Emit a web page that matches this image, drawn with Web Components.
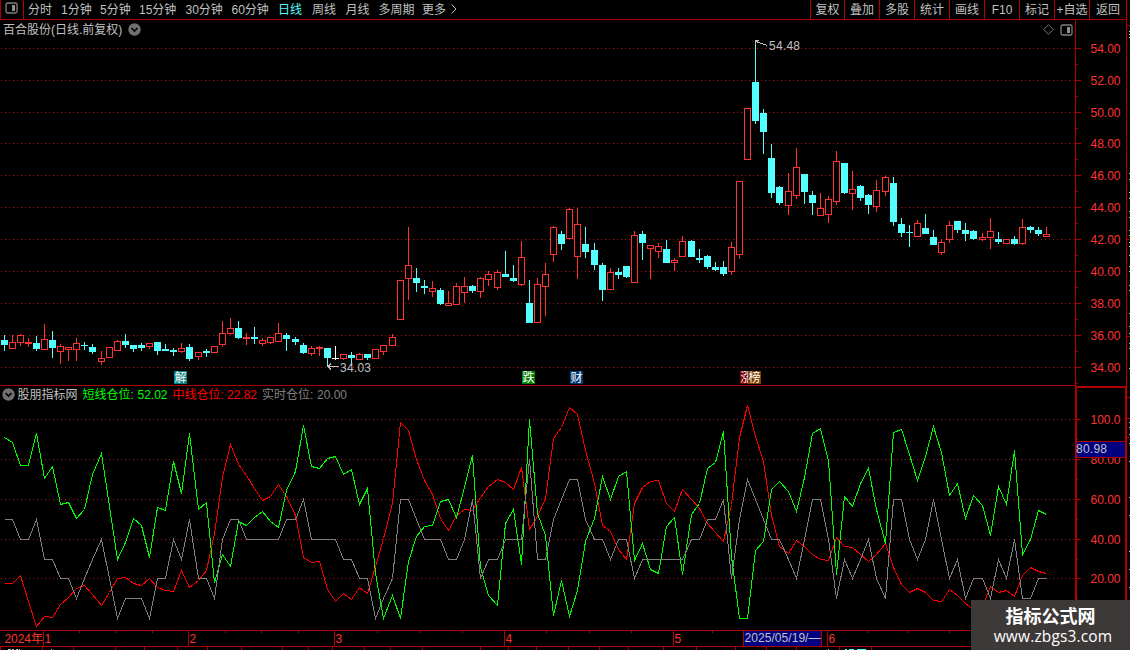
<!DOCTYPE html>
<html lang="zh-CN">
<head>
<meta charset="utf-8">
<title>百合股份 日线</title>
<style>
  html, body {
    margin: 0;
    background: #000;
  }

  body {
    width: 1130px;
    height: 650px;
    overflow: hidden;
    font: 12px/14px "Liberation Sans", "Noto Sans CJK SC", sans-serif;
    color: #c0c0c0;
  }
</style>
</head>
<body>
<stock-terminal></stock-terminal>

<script>
// x of the n-th bar: 8px steps, with one extra pixel every 12 bars
const barX = n => 4 + n * 8 + Math.floor((n - (n >= 60 ? 1 : 0)) / 12);

// kind (r up, c down, w flat), high, body top, body bottom, low
const BARS = `c335,340,345,351 r335,342,349,349 r334,335,343,346 R338,342,344,347 c336,343,349,351
r324,339,350,350 c331,340,348,358 r344,346,352,364 r347,347,350,361 r338,343,350,361
c342,345,346,350 c344,347,352,354 r351,358,362,365 r347,347,358,358 r340,341,351,351
c334,341,345,348 c345,345,349,352 c343,345,348,351 r343,343,347,349 c342,342,351,355
c344,349,351,351 c348,350,352,356 r343,348,352,353 c344,347,359,361 r352,352,357,360
c349,351,353,357 r346,346,353,353 r321,333,345,347 r318,328,334,335 c321,328,338,339
R333,337,339,345 c327,337,339,344 r338,340,344,346 r337,337,343,344 r323,333,342,342
c333,335,339,351 c337,339,342,345 c343,345,353,354 r346,348,354,356 R346,347,349,356
c348,348,358,366 w346,358,359,360 r354,354,359,360 c352,355,358,366 r353,354,360,360
c354,354,358,360 r349,349,359,359 r345,345,352,355 r334,337,346,346 r280,280,320,320
r227,265,279,300 c268,278,283,292 c280,286,288,294 r281,288,292,297 c288,290,304,305
r291,303,306,306 r283,286,305,305 r277,286,293,303 c285,286,291,293 r277,278,292,298
r271,274,280,286 r270,272,288,290 c251,274,277,277 c265,278,281,282 r241,257,285,286
c280,303,323,323 r278,284,323,323 r263,274,287,316 r226,227,255,262 c231,234,244,250
r208,209,239,239 r208,224,257,279 c227,244,252,258 c243,250,265,270 c263,265,290,301
r268,272,290,290 c268,272,275,279 c266,266,277,278 r231,235,283,283 c231,234,243,260
r245,245,249,279 r243,246,252,258 c240,249,263,263 r258,260,263,271 r236,241,257,257
c240,241,257,257 c249,258,260,263 c255,256,267,269 c262,267,270,271 c261,267,274,276
r242,247,272,275 r181,181,255,259 r108,108,160,160 c40,82,121,124 c109,113,132,154
c144,158,193,198 c186,187,203,205 r173,191,206,215 r148,167,196,199 c174,174,192,204
c191,195,203,215 r193,208,216,216 r196,199,215,223 r151,161,202,205 c163,163,193,194
r171,189,194,210 c185,186,198,201 c194,195,205,214 r180,190,207,212 r176,177,192,196
c177,183,222,226 c218,224,233,237 c225,232,233,247 r220,223,237,237 c214,228,234,234
c230,237,245,245 r239,242,253,255 r221,225,240,243 c221,221,230,233 c223,230,234,241
c230,231,239,240 r233,237,240,241 r218,231,238,249 c232,239,242,244 r239,239,244,244
c236,239,244,245 r219,227,244,245 c226,227,230,233 c227,230,234,236 r227,234,237,237`
  .split(/\s+/).map(s => [s[0], ...s.slice(1).split(',').map(Number)]);

const SHORT = [437,442,465,465,433,478,466,504,502,518,509,474,453,506,559,542,518,525,557,507,
  510,461,493,433,509,502,582,554,566,521,525,517,511,521,527,490,471,425,466,468,458,456,474,
  469,504,488,573,618,595,618,561,536,526,525,501,499,517,487,455,567,595,605,523,509,564,419,
  513,535,615,580,616,590,541,518,476,499,476,471,560,543,569,573,526,517,574,514,503,468,462,
  431,556,618,618,550,541,489,481,491,511,477,433,428,460,574,496,506,483,468,509,543,432,429,
  454,480,456,426,452,495,483,518,495,505,535,486,504,450,554,539,510,514];

const MIDDLE = [583,583,575,601,626,616,617,604,597,588,585,594,605,592,578,577,583,585,578,587,
  590,591,570,587,580,570,533,477,444,464,475,488,500,496,484,496,515,557,562,561,589,601,593,
  599,587,593,566,538,503,422,430,459,480,494,518,530,515,509,510,497,486,479,482,489,467,529,
  516,498,438,427,407,414,450,483,525,531,549,559,503,487,481,480,503,511,489,499,508,523,532,
  541,504,437,405,436,461,515,546,553,540,546,554,559,560,537,546,547,554,561,554,543,567,584,
  592,588,592,600,601,589,595,603,609,606,586,592,590,596,575,567,571,573];

// live position is always a multiple of 10
const LIVE = [5,5,4,4,5,3,3,2,2,1,2,3,4,2,0,1,1,1,0,2,2,4,3,5,2,2,1,4,5,5,4,4,4,4,4,5,5,6,4,4,4,
  4,3,3,2,2,0,1,2,6,6,5,4,4,4,3,3,4,6,2,3,3,4,4,4,8,3,3,5,6,7,7,5,4,4,3,4,4,2,3,3,3,3,3,3,4,4,
  5,5,6,2,5,7,6,5,4,4,3,2,4,6,6,4,1,3,2,3,4,2,1,6,6,4,3,4,6,4,2,3,1,2,2,1,3,2,4,1,1,2,2]
  .map(v => [618,598,578,559,539,519,499,479,459][v]);

const PRICES = [[54, 48], [52, 80], [50, 112], [48, 143], [46, 175], [44, 207], [42, 239],
  [40, 271], [38, 303], [36, 335], [34, 367]];
const LEVELS = [['100.0', 419], ['80.00', 459], ['60.00', 499], ['40.00', 539], ['20.00', 578]];

const rect = (x, y, w, h, fill) => `<rect x="${x}" y="${y}" width="${w}" height="${h}" fill="${fill}"/>`;
const dots = y => `<path d="M1 ${y + 0.5}H1074" stroke="#a01414" stroke-dasharray="1 3"/>`;

const TOGGLE = `<svg class="toggle" width="13" height="13" viewBox="0 0 13 13">
  <circle cx="6.5" cy="6.5" r="6.2" fill="#707070"/>
  <path d="M3.5 5l3 3 3-3" fill="none" stroke="#000" stroke-width="1.6"/></svg>`;

const PANE_ICON = `<svg width="13" height="12" viewBox="0 0 13 12">
  <rect x="1" y="1" width="11" height="10" rx="1.5" fill="none" stroke="#808080" stroke-width="1.3"/>
  <rect x="7" y="3" width="3" height="6" fill="#909090"/></svg>`;

class BaseElement extends HTMLElement {
  constructor() {
    super();
    this.attachShadow({ mode: 'open' });
    this.shadowRoot.innerHTML = `<style>
      :host { display: block; box-sizing: border-box; }
      svg { display: block; flex: none; }
      ${this.styles()}
    </style>${this.markup()}`;
  }

  styles() { return ''; }
  markup() { return '<slot></slot>'; }
}

class PeriodTab extends BaseElement {
  styles() {
    return `
      :host { flex: none; white-space: nowrap; }
      :host([active]) { color: #54ffff; }
    `;
  }
}

class ToolButton extends BaseElement {
  styles() {
    return `
      :host {
        flex: none;
        width: 35px;
        height: 19px;
        line-height: 20px;
        border-left: 1px solid #b00000;
        text-align: center;
        white-space: nowrap;
      }
    `;
  }
}

class StockToolbar extends BaseElement {
  styles() {
    return `
      :host {
        display: flex;
        width: 1126px;
        height: 20px;
        border-bottom: 1px solid #b00000;
        line-height: 20px;
      }
      .layout {
        display: flex;
        width: 24px;
        box-sizing: border-box;
        padding: 2px 0 0 4px;
        border: solid #b00000;
        border-width: 0 1px;
      }
      .periods { display: flex; flex: 1; padding-left: 4px; }
      .more { margin-top: 4px; }
      .tools { display: flex; }
    `;
  }

  markup() {
    const periods = [['分时', 33], ['1分钟', 39], ['5分钟', 39], ['15分钟', 46.5], ['30分钟', 46],
      ['60分钟', 46.5], ['日线', 34], ['周线', 33.5], ['月线', 33], ['多周期', 43.5], ['更多', 28]];
    const tools = [['复权', 34], ['叠加', 35], ['多股', 35], ['统计', 35], ['画线', 35], ['F10', 35],
      ['标记', 35], ['+自选', 35], ['返回', 37]];
    return `
      <div class="layout">${PANE_ICON}</div>
      <div class="periods">
        ${periods.map(([t, w]) =>
          `<period-tab style="width:${w}px"${t === '日线' ? ' active' : ''}>${t}</period-tab>`).join('')}
        <svg class="more" width="8" height="10" viewBox="0 0 8 10"><path d="M1.5.5l4.5 4.5-4.5 4.5" fill="none" stroke="#c0c0c0"/></svg>
      </div>
      <div class="tools">
        ${tools.map(([t, w]) => `<tool-button style="width:${w}px">${t}</tool-button>`).join('')}
      </div>
    `;
  }
}

class CandlePanel extends BaseElement {
  styles() {
    return `
      :host { width: 1075px; height: 366px; border-bottom: 1px solid #b00000; }
      header { display: flex; align-items: center; height: 20px; padding: 0 2px 0 3px; box-sizing: border-box; }
      .toggle { margin: -1px auto 0 5.5px; }
      .corner { display: flex; align-items: center; gap: 6px; margin-top: -1px; }
    `;
  }

  candle([kind, high, top, bottom, low], n) {
    const x = barX(n);
    const color = { c: '#54ffff', w: '#ffffff' }[kind] || '#ff3232';
    const wick = (a, b) => b > a ? rect(x, a, 1, b - a, color) : '';
    if (kind === 'r') {
      return wick(high, top) + wick(bottom, low) +
        `<rect x="${x - 2.5}" y="${top + 0.5}" width="6" height="${bottom - top - 1}" fill="#000" stroke="${color}"/>`;
    }
    return wick(high, low) + rect(x - 3, top, 7, bottom - top, color);
  }

  tag(x, w, color, text, size = 12) {
    return rect(x, 371, w, 13, color) +
      `<text x="${x + w / 2}" y="382" font-size="${size}" fill="#fff" text-anchor="middle">${text}</text>`;
  }

  markup() {
    return `
      <header>
        <span>百合股份(日线.前复权)</span>${TOGGLE}
        <div class="corner">
          <svg width="11" height="11" viewBox="0 0 11 11"><path d="M5.5.7l4.8 4.8-4.8 4.8L.7 5.5z" fill="none" stroke="#777"/></svg>
          ${PANE_ICON}
        </div>
      </header>
      <svg width="1075" height="345" viewBox="0 40 1075 345">
        <g shape-rendering="crispEdges">
          ${PRICES.map(p => dots(p[1])).join('')}
          ${BARS.map((b, n) => this.candle(b, n)).join('')}
        </g>
        <g fill="none" stroke="#c0c0c0" shape-rendering="crispEdges">
          <path d="M767 45.5l-4-1.5-7-2.5M759 40.5h-3.5v4"/>
          <path d="M328 366.5h11M331 363.5l-3 3 3 3"/>
        </g>
        <g fill="#c0c0c0">
          <text x="769" y="50" textLength="31">54.48</text>
          <text x="340" y="372" textLength="31">34.03</text>
        </g>
        ${this.tag(174, 13, '#008080', '解')}
        ${this.tag(522, 13, '#008000', '跌')}
        ${this.tag(570, 13, '#003a70', '财')}
        ${this.tag(740, 13, '#800000', '涨')}
        ${this.tag(748, 13, '#804000', '榜')}
      </svg>
    `;
  }
}

class IndicatorPanel extends BaseElement {
  styles() {
    return `
      :host { width: 1075px; height: 244px; }
      header { display: flex; align-items: center; height: 17px; padding-left: 1.5px; white-space: nowrap; }
      .toggle { margin: -1px 3px 0 0; }
      .name { width: 65px; }
      .entry { width: 90px; }
      .entry b { font-weight: normal; display: inline-block; width: 55px; }
    `;
  }

  line(values, color) {
    const points = values.map((y, n) => `${barX(n) + 0.5},${y + 0.5}`).join(' ');
    return `<polyline points="${points}" fill="none" stroke="${color}"/>`;
  }

  markup() {
    return `
      <header>
        ${TOGGLE}
        <span class="name">股朋指标网</span>
        <span class="entry" style="color:#00ff00"><b>短线仓位:</b>52.02</span>
        <span class="entry" style="color:#ff0000;width:89.5px"><b style="width:54.5px">中线仓位:</b>22.82</span>
        <span class="entry" style="color:#808080"><b>实时仓位:</b>20.00</span>
      </header>
      <svg width="1075" height="227" viewBox="0 403 1075 227" shape-rendering="crispEdges">
        ${LEVELS.map(l => dots(l[1])).join('')}
        ${this.line(MIDDLE, '#ff0000')}
        ${this.line(SHORT, '#00ff00')}
        ${this.line(LIVE, '#808080')}
      </svg>
    `;
  }
}

class PriceAxis extends BaseElement {
  markup() {
    return `
      <svg width="51" height="366" viewBox="1075 20 51 366">
        ${rect(1075, 20, 1, 366, '#b00000')}
        ${PRICES.map(([, y]) => rect(1076, y, 5, 1, '#b00000') + rect(1076, y + 16, 2, 1, '#b00000')).join('')}
        <g fill="#ff3232">
          ${PRICES.map(([p, y]) => `<text x="1090.5" y="${y + 5}" textLength="30">${p}.00</text>`).join('')}
        </g>
      </svg>
    `;
  }
}

class LevelAxis extends BaseElement {
  markup() {
    return `
      <svg width="52" height="244" viewBox="1075 386 52 244">
        <path d="M1076 386v244M1075 387h52M1126 386v244" fill="none" stroke="#b00000" stroke-width="2" shape-rendering="crispEdges"/>
        ${LEVELS.map(([, y]) => rect(1077, y, 4, 1, '#b00000') + rect(1077, y + 20, 1, 1, '#b00000')).join('')}
        <g fill="#ff3232">
          ${LEVELS.map(([t, y]) => `<text x="1090.5" y="${y + 5}" textLength="30">${t}</text>`).join('')}
        </g>
        ${rect(1077, 441, 48, 17, '#b00000')}${rect(1077, 442, 48, 15, '#000080')}
        <text x="1076" y="453" fill="#c0c0c0" textLength="31">80.98</text>
      </svg>
    `;
  }
}

class TimeAxis extends BaseElement {
  markup() {
    const months = [[43, '1'], [188, '2'], [334, '3'], [504, '4'], [673, '5'], [827, '6']];
    const weeks = [79, 116, 152, 225, 261, 298, 377, 419, 462, 546, 589, 631, 712, 868, 908, 949];
    const cells = [0, 42, 73, 115, 144, 177, 207, 241, 282, 308, 332, 364, 390, 422, 480, 508, 536,
      568, 599, 628, 663, 696, 735, 766, 796, 839, 871];
    return `
      <svg width="1127" height="20" viewBox="0 630 1127 20">
        ${rect(0, 630, 1127, 1, '#b00000')}${rect(0, 646, 1127, 1, '#b00000')}
        ${weeks.map(x => rect(x, 631, 1, 2, '#b00000')).join('')}
        ${months.map(([x]) => rect(x, 631, 1, 15, '#b00000')).join('')}
        ${cells.map(x => rect(x, 647, 1, 3, '#b00000')).join('')}
        <g fill="#ff3232">
          <text x="4.5" y="643" textLength="38.5">2024年</text>
          ${months.map(([x, t]) => `<text x="${x + 1.5}" y="643">${t}</text>`).join('')}
        </g>
        ${rect(743, 631, 79, 15, '#b00000')}${rect(744, 631, 77, 15, '#000080')}
        <text x="744.5" y="642" fill="#c0c0c0" textLength="76">2025/05/19/—</text>
        <path d="M8 649.5h3m1 0h2m2 0h2m1 0h1M51 649.5h1M828 649.5h1" stroke="#c0c0c0"/>
        <path d="M845 649.5h2m2 0h5m3 0h9" stroke="#54ffff"/>
      </svg>
    `;
  }
}

// left edge of the quote list, cut off by the window
class QuoteEdge extends BaseElement {
  markup() {
    const ticks = [25, 239, 336, 397, 418, 437];
    const marks = [31, 34, 37, 173, 179, 192, 198, 211, 217, 230, 235, 242, 246, 255, 266, 271, 285,
      290, 313, 326, 333, 343, 348, 368, 422, 427, 434, 443, 461, 497, 515, 551, 569, 587];
    return `
      <svg width="4" height="650" viewBox="1126 0 4 650">
        ${rect(1126, 0, 1, 650, '#b00000')}
        ${ticks.map(y => rect(1127, y, 3, 1, '#b00000')).join('')}
        ${marks.map(y => rect(1129, y, 1, 1, '#c0c0c0')).join('')}
      </svg>
    `;
  }
}

class SiteMark extends BaseElement {
  styles() {
    return `
      :host {
        width: 159px;
        height: 50px;
        padding-top: 3px;
        background: #3d3939;
        color: #fff;
        text-align: center;
      }
      .name { font: bold 18px/24px "Noto Sans CJK SC", sans-serif; }
      .url { padding-left: 5px; font: 15.5px/18px "Open Sans", "Noto Sans", sans-serif; letter-spacing: 0.15px; }
    `;
  }

  markup() {
    return '<div class="name">指标公式网</div><div class="url">www.zbgs3.com</div>';
  }
}

class StockTerminal extends BaseElement {
  styles() {
    return `
      :host { display: flex; position: relative; width: 1130px; height: 650px; }
      .main { width: 1126px; }
      .row { display: flex; }
      site-mark { position: absolute; right: 0; bottom: 0; }
    `;
  }

  markup() {
    return `
      <div class="main">
        <stock-toolbar></stock-toolbar>
        <div class="row"><candle-panel></candle-panel><price-axis></price-axis></div>
        <div class="row"><indicator-panel></indicator-panel><level-axis></level-axis></div>
        <time-axis></time-axis>
      </div>
      <quote-edge></quote-edge>
      <site-mark></site-mark>
    `;
  }
}

customElements.define('period-tab', PeriodTab);
customElements.define('tool-button', ToolButton);
customElements.define('stock-toolbar', StockToolbar);
customElements.define('candle-panel', CandlePanel);
customElements.define('indicator-panel', IndicatorPanel);
customElements.define('price-axis', PriceAxis);
customElements.define('level-axis', LevelAxis);
customElements.define('time-axis', TimeAxis);
customElements.define('quote-edge', QuoteEdge);
customElements.define('site-mark', SiteMark);
customElements.define('stock-terminal', StockTerminal);
</script>
</body>
</html>
